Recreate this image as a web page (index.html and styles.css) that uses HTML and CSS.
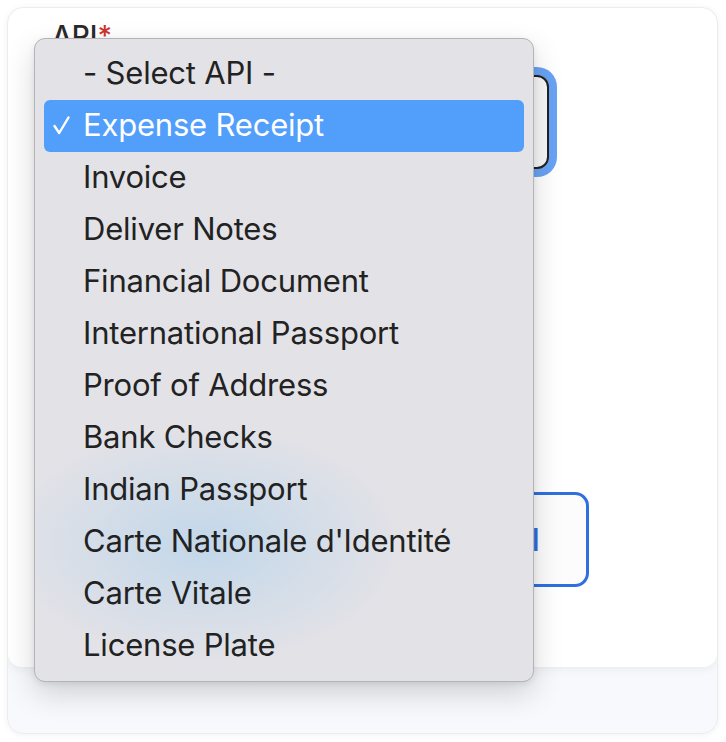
FILE: index.html
```html
<!DOCTYPE html>
<html>
<head>
<meta charset="utf-8">
<link rel="stylesheet" href="styles.css">
</head>
<body>
<div class="card">
  <div class="panel">
    <div class="label">API<span class="req">*</span></div>
    <div class="select"></div>
    <button class="run">Use this API</button>
  </div>
  <div class="footer"></div>

  <div class="menu">
    <div class="opt">- Select API -</div>
    <div class="opt sel"><svg class="check" width="17" height="19" viewBox="0 0 17 19"><path d="M1.5 10 L6.2 17 L15.5 1.5" fill="none" stroke="#fff" stroke-width="2.4" stroke-linecap="round" stroke-linejoin="round"/></svg>Expense Receipt</div>
    <div class="opt">Invoice</div>
    <div class="opt">Deliver Notes</div>
    <div class="opt">Financial Document</div>
    <div class="opt">International Passport</div>
    <div class="opt">Proof of Address</div>
    <div class="opt">Bank Checks</div>
    <div class="opt">Indian Passport</div>
    <div class="opt">Carte Nationale d'Identité</div>
    <div class="opt">Carte Vitale</div>
    <div class="opt">License Plate</div>
  </div>
</div>
</body>
</html>
```
FILE: styles.css
```css
html, body {
  margin: 0;
  padding: 0;
  background: #ffffff;
}
body {
  font-family: Inter, "Noto Sans", "Liberation Sans", sans-serif;
  width: 726px;
  height: 742px;
  overflow: hidden;
}
.card {
  position: relative;
  margin: 7px 8px 0 7px;
  width: 711px;
  height: 727px;
  box-sizing: border-box;
  border: 1px solid #ececee;
  border-radius: 16px;
  background: linear-gradient(#f3f4f8, #f8f9fc);
  box-shadow: 0 1px 6px rgba(0,0,0,0.06);
  overflow: hidden;
  display: flex;
  flex-direction: column;
}
.panel {
  height: 659px;
  background: #ffffff;
  border-radius: 15px 15px 14px 14px;
  box-shadow: 0 3px 10px rgba(0,0,0,0.05);
  padding: 11px 0 0 44px;
  box-sizing: border-box;
  display: flex;
  flex-direction: column;
  align-items: flex-start;
}
.label {
  font-size: 28px;
  line-height: 34px;
  color: #2a2a2a;
  font-weight: 500;
}
.req {
  color: #d0312d;
}
.select {
  margin-top: 22px;
  width: 497px;
  height: 94px;
  box-sizing: border-box;
  border: 2px solid #222;
  border-radius: 12px;
  background: #f8f8f8;
  box-shadow: 0 0 0 8px #69a3f4;
}
.run {
  margin-top: 323px;
  margin-left: 84px;
  width: 453px;
  height: 95px;
  box-sizing: border-box;
  border: 3px solid #2f6fdf;
  border-radius: 14px;
  background: #fcfcfd;
  color: #2f6fdf;
  font-family: Inter, "Noto Sans", sans-serif;
  font-size: 31px;
  font-weight: 500;
  text-align: right;
  padding: 0 46px 0 0;
}
.footer {
  flex: 1;
}
.menu {
  position: absolute;
  left: 26px;
  top: 30px;
  width: 500px;
  height: 644px;
  box-sizing: border-box;
  padding: 9px;
  border: 1px solid #b4b4b8;
  border-radius: 11px;
  background:
    radial-gradient(ellipse 200px 120px at 170px 505px, rgba(190,214,234,0.9), rgba(190,214,234,0) 100%),
    #e3e2e7;
  box-shadow: 0 12px 30px rgba(0,0,0,0.16), 0 2px 6px rgba(0,0,0,0.08);
}
.opt {
  position: relative;
  height: 52px;
  box-sizing: border-box;
  padding-bottom: 3px;
  display: flex;
  align-items: center;
  padding-left: 39px;
  font-size: 31px;
  color: #222222;
  border-radius: 6px;
  letter-spacing: -0.2px;
}
.opt.sel {
  background: #529efb;
  color: #ffffff;
}
.check {
  position: absolute;
  left: 9px;
  top: 16px;
}
```
